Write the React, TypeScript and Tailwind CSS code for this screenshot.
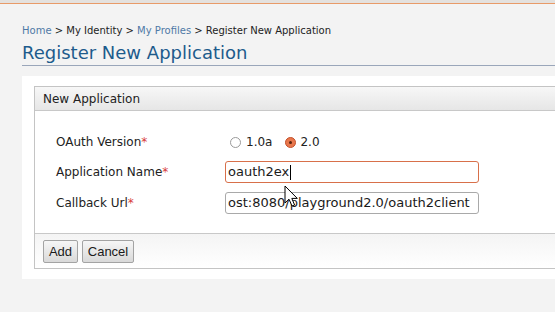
import React from "react";

function Req() {
  return <span className="text-[#d83a3a]">*</span>;
}

function Radio({ checked }: { checked?: boolean }) {
  if (checked) {
    return (
      <span className="w-[11px] h-[11px] rounded-full border border-[#c4502a] bg-[#e8774c] flex items-center justify-center">
        <span className="w-[3px] h-[3px] rounded-full bg-[#5a2410]" />
      </span>
    );
  }
  return <span className="w-[11px] h-[11px] rounded-full border border-[#9a9a9a] bg-white" />;
}

function Btn({ label, w }: { label: string; w: string }) {
  return (
    <button
      className={`${w} h-[23px] border border-[#a3a3a3] rounded-[2px] bg-gradient-to-b from-[#f6f6f6] to-[#d9d9d9] text-[13px] text-[#1a1a1a] font-['Liberation_Sans',sans-serif] flex items-center justify-center`}
    >
      {label}
    </button>
  );
}

export default function App() {
  return (
    <div className="relative w-[555px] h-[312px] overflow-hidden bg-[#f3f3f3] font-['DejaVu_Sans',sans-serif]">
      <div className="h-[4px] bg-[#e4e1de] border-b border-[#e89a68]" />

      <div className="pl-[22px] pt-[21px]">
        <div className="text-[10px] leading-[12px] text-[#222]">
          <span className="text-[#4f79a6]">Home</span> &gt; My Identity &gt;{" "}
          <span className="text-[#4f79a6]">My Profiles</span> &gt; Register New Application
        </div>

        <h1 className="mt-[5px] pb-[1px] border-b border-[#9aa6ba] text-[18px] leading-[22px] text-[#1d5b8c]">
          Register New Application
        </h1>

        <div className="mt-[10px] bg-white pl-[12px] pt-[10px] pb-[10px]">
          <div className="w-[560px] border border-[#c4c4c4]">
            <div className="h-[24px] pl-[8px] flex items-center border-b border-[#c8c8c8] bg-gradient-to-b from-[#f7f7f7] to-[#e6e6e6] text-[12px] text-[#222]">
              New Application
            </div>

            <div className="pt-[20px] pb-[19px] pl-[21px] flex flex-col gap-[8px] text-[12px] text-[#222]">
              <div className="h-[22px] flex items-center">
                <div className="w-[169px]">
                  OAuth Version<Req />
                </div>
                <div className="flex items-center pl-[5px] text-[12px]">
                  <Radio />
                  <span className="ml-[5px]">1.0a</span>
                  <span className="ml-[13px]">
                    <Radio checked />
                  </span>
                  <span className="ml-[4px]">2.0</span>
                </div>
              </div>

              <div className="h-[22px] flex items-center">
                <div className="w-[169px]">
                  Application Name<Req />
                </div>
                <div className="relative w-[254px] h-[22px] border border-[#d8704a] rounded-[3px] px-[2px] flex items-center text-[13px] text-[#1a1a1a]">
                  oauth2ex
                  <span className="w-px h-[15px] bg-black ml-px" />
                </div>
              </div>

              <div className="h-[22px] flex items-center mt-[1px]">
                <div className="w-[169px]">
                  Callback Url<Req />
                </div>
                <div className="w-[254px] h-[22px] border border-[#a9a9a9] rounded-[3px] px-[2px] flex items-center overflow-hidden whitespace-nowrap text-[13px] text-[#1a1a1a]">
                  ost:8080/playground2.0/oauth2client
                </div>
              </div>
            </div>

            <div className="border-t border-[#c8c8c8] h-[35px] pl-[8px] pt-[6px] flex gap-[4px] bg-gradient-to-b from-[#f4f4f4] to-white">
              <Btn label="Add" w="w-[35px]" />
              <Btn label="Cancel" w="w-[52px]" />
            </div>
          </div>
        </div>
      </div>

      <svg className="absolute left-[284px] top-[185px]" width="15" height="23" viewBox="0 0 15 23">
        <path d="M1 1 L1 18 L5 14.2 L8 21 L10.6 20 L7.8 13.4 L13.3 13.4 Z" fill="#fff" stroke="#000" strokeWidth="1" strokeLinejoin="round" />
      </svg>
    </div>
  );
}
